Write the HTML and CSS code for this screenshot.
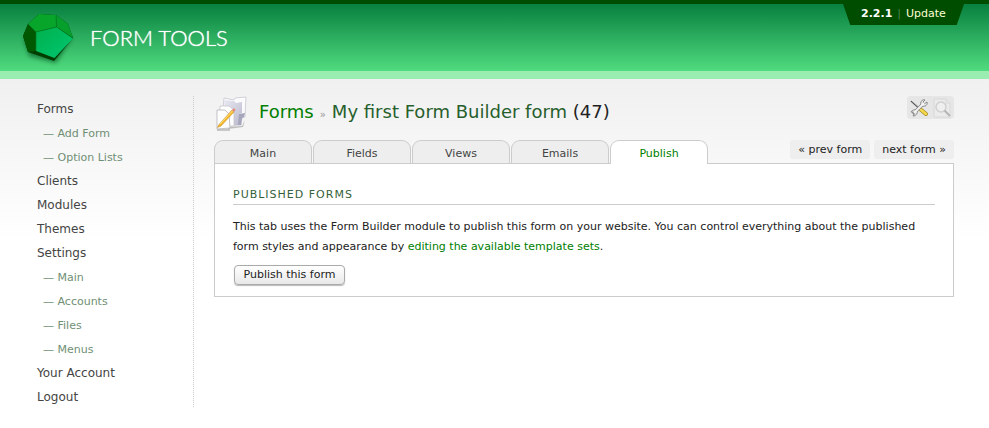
FILE: index.html
```html
<!DOCTYPE html>
<html lang="en">
<head>
<meta charset="utf-8">
<title>Form Tools - Publish</title>
<link rel="stylesheet" href="styles.css">
</head>
<body>
<header class="header">
  <a class="logo" href="#">
    <svg width="58" height="58" viewBox="19 9 58 58" aria-hidden="true">
      <defs>
        <filter id="soft" x="-20%" y="-20%" width="140%" height="150%"><feGaussianBlur stdDeviation="2"/></filter>
        <linearGradient id="front" x1="0" y1="0" x2="1" y2="1"><stop offset="0" stop-color="#00b04b"/><stop offset="1" stop-color="#00c773"/></linearGradient>
      </defs>
      <path d="M24 40 36 25 72 38 56 63 29 56Z" fill="#004d1c" opacity=".6" filter="url(#soft)"/>
      <path d="M28 24 39 14 56 15 68 24 73 38 54 61 28 52 23 36Z" fill="#003d00"/>
      <path d="M28 24 39 14 56 15 56.500 27 36 32Z" fill="#08a52b"/>
      <path d="M56 15 68 24 73 38 56.500 27Z" fill="#079f2b"/>
      <path d="M28 24 36 32 36 51 28 52 23 36Z" fill="#005800"/>
      <path d="M36 32 56.500 27 73 38.500 54.500 58 36 51Z" fill="url(#front)"/>
      <path d="M28 24 36 32 56.500 27 56 15M56.500 27 73 38M36 32V51" fill="none" stroke="#007c22" stroke-width=".7"/>
    </svg>
    <span class="logo-text">FORM TOOLS</span>
  </a>
  <div class="version"><strong>2.2.1</strong><span class="bar">|</span><a href="#">Update</a></div>
</header>
<div class="page">
  <nav class="side" aria-label="Main menu">
    <a href="#">Forms</a>
    <a class="sub" href="#">— Add Form</a>
    <a class="sub" href="#">— Option Lists</a>
    <a href="#">Clients</a>
    <a href="#">Modules</a>
    <a href="#">Themes</a>
    <a href="#">Settings</a>
    <a class="sub" href="#">— Main</a>
    <a class="sub" href="#">— Accounts</a>
    <a class="sub" href="#">— Files</a>
    <a class="sub" href="#">— Menus</a>
    <a href="#">Your Account</a>
    <a href="#">Logout</a>
  </nav>
  <main class="content">
    <div class="title-row">
      <svg class="title-icon" width="34" height="36" viewBox="0 0 34 36" aria-hidden="true">
        <defs>
          <linearGradient id="folder" x1="0" y1="0" x2="1" y2="1"><stop offset="0" stop-color="#e9e9f2"/><stop offset="1" stop-color="#b9b9cd"/></linearGradient>
        </defs>
        <path d="M12 31 28 30 31 24 29 31 14 33Z" fill="#999" opacity=".6"/>
        <path d="M10 2 20 4 21 2 32 1 31 21 28 22 27 29 12 30 9 12Z" fill="#fbfbfd" stroke="#c6c6d0" stroke-width=".8"/>
        <path d="M10 4 20 5 22 7 28 6 28 17 25 18 25 29 12 29Z" fill="url(#folder)"/>
        <path d="M25 18 31 17 30 21 28 22 27 29 24 29Z" fill="#a5a5bc"/>
        <path d="M6 10H15L20 14V30H6Z" fill="#fff" stroke="#c5c5ca" stroke-width=".8"/>
        <path d="M3 14 11 14 15 18 16 32 3 33Z" fill="#fdfdfd" stroke="#b4b4b9" stroke-width=".8"/>
        <path d="M3 34H16" stroke="#999"/>
        <path d="M3.500 31.500 5 28.500 18 14 20 16 7 30Z" fill="#f7b928" stroke="#b8862c" stroke-width=".5"/>
        <path d="M6 28 18.500 15" stroke="#ffe07c"/>
        <path d="M18 14 20 12 21.500 14 20 16Z" fill="#e28a7c"/>
      </svg>
      <h1><a href="#">Forms</a><span class="sep">»</span>My first Form Builder form <span class="id">(47)</span></h1>
      <div class="tools">
        <button type="button" aria-label="Edit form settings">
          <svg width="20" height="20" viewBox="0 0 20 20">
            <path d="M2 3 12 12" stroke="#555" stroke-width="1.500"/>
            <path d="M2 2 12 11" stroke="#ddd" stroke-width=".7"/>
            <path d="M11 11 17 16" stroke="#a78b20" stroke-width="4" stroke-linecap="round"/>
            <path d="M11 11 17 16" stroke="#f5d84d" stroke-width="2.500" stroke-linecap="round"/>
            <path d="M4 16 15 5" stroke="#888" stroke-width="3.500"/>
            <path d="M2 14C3 12 6 11 8 13 9 15 7 18 4 18L6 15 4 14ZM12 7C11 4 13 1 16 2L14 4 15 6 18 4C19 7 16 9 13 8Z" fill="#eee" stroke="#888"/>
            <path d="M5 15 15 5" stroke="#f3f3f3" stroke-width="2"/>
          </svg>
        </button>
        <button type="button" aria-label="View submissions" disabled>
          <svg width="20" height="20" viewBox="0 0 20 20">
            <path d="M2 1H14L18 5V19H2Z" fill="#ebebeb" stroke="#d9d9d9"/>
            <path d="M14 1V5H18" fill="none" stroke="#d9d9d9"/>
            <circle cx="9" cy="9" r="5" fill="#efefef" stroke="#d0d0d0" stroke-width="1.500"/>
            <path d="M12.500 12.500 18 18" stroke="#b5b5b5" stroke-width="2"/>
          </svg>
        </button>
      </div>
    </div>
    <div class="tab-row">
      <nav class="tabs" aria-label="Form sections">
        <a href="#">Main</a>
        <a href="#">Fields</a>
        <a href="#">Views</a>
        <a href="#">Emails</a>
        <a class="active" href="#">Publish</a>
      </nav>
      <div class="pager"><a href="#">« prev form</a><a href="#">next form »</a></div>
    </div>
    <section class="panel">
      <h2>PUBLISHED FORMS</h2>
      <p>This tab uses the Form Builder module to publish this form on your website. You can control everything about the published form styles and appearance by <a href="#">editing the available template sets</a>.</p>
      <button class="publish" type="button">Publish this form</button>
    </section>
  </main>
</div>
</body>
</html>
```
FILE: styles.css
```css
* { box-sizing: border-box; }

body {
  margin: 0;
  background: #fff;
  color: #222;
  font: 11px/20px Verdana, "DejaVu Sans", sans-serif;
}

a { color: inherit; text-decoration: none; }

.header {
  display: flex;
  justify-content: space-between;
  align-items: flex-start;
  height: 79px;
  padding: 0 25px 0 19px;
  border-top: 4px solid #004d00;
  border-bottom: 8px solid #9aedb0;
  background: linear-gradient(#08803f, #50db7f);
}

.logo { display: flex; align-items: center; gap: 13px; padding-top: 5px; }

.logo-text {
  color: #fff;
  font: 300 22px/28px Lato, sans-serif;
  text-shadow: 0 0 1px #fff;
}

.version {
  width: 121px;
  height: 21px;
  padding-left: 18px;
  background: #004d00;
  clip-path: polygon(0 0, 100% 0, 94% 100%, 6% 100%);
  color: #fff;
  line-height: 19px;
}

.version .bar { margin: 0 5px; color: #4d8050; }
.version a { color: #ffffd5; }

.page {
  display: flex;
  align-items: flex-start;
  padding: 17px 35px 20px 37px;
  background: linear-gradient(#f0f0f0, #fff 160px);
}

.side {
  display: flex;
  flex-direction: column;
  flex: 0 0 157px;
  padding-top: 1px;
  height: 311px;
  border-right: 1px dotted #ccc;
  color: #444;
  font-size: 12px;
  line-height: 24px;
}

.side .sub { height: 24px; padding-left: 6px; color: #6f8f74; font-size: 11px; line-height: 26px; }

.content { flex: 1; margin-left: 20px; }

.title-row { display: flex; align-items: flex-start; height: 44px; }

h1 {
  flex: 1;
  margin: 0 0 0 11px;
  color: #275f2c;
  font-size: 18px;
  font-weight: 400;
  line-height: 32px;
}

h1 a { color: #008000; }
h1 .sep { margin: 0 6px; color: #999; font-size: 10px; }
h1 .id { color: #222; }

.tools {
  display: flex;
  gap: 3px;
  padding: 2px;
  border-radius: 4px;
  background: #e6e6e6;
}

.tools button { height: 19px; padding: 0; border: 0; background: none; }
.tools svg { display: block; fill: none; }

.tab-row { display: flex; justify-content: space-between; height: 23px; }
.tabs { display: flex; gap: 1px; }

.tabs a {
  width: 98px;
  height: 23px;
  border: 1px solid #ccc;
  border-bottom: 0;
  border-radius: 9px 9px 0 0;
  background: #eee;
  color: #444;
  line-height: 25px;
  text-align: center;
}

.tabs .active { z-index: 1; height: 24px; background: #fff; color: #008000; }

.pager { display: flex; gap: 4px; }

.pager a {
  height: 19px;
  padding: 0 8px;
  border-radius: 3px;
  background: #eee;
}

.panel {
  padding: 21px 18px 11px;
  border: 1px solid #ccc;
  background: #fff;
}

h2 {
  margin: 0 0 12px;
  border-bottom: 1px solid #ccc;
  color: #365f3c;
  font-size: 11px;
  font-weight: 400;
  letter-spacing: 1px;
  line-height: 19px;
}

p { margin: 0 0 8px; }
p a { color: #008000; }

.publish {
  display: block;
  min-width: 111px;
  height: 20px;
  margin-left: 1px;
  padding: 0 8px;
  border: 1px solid #aaa;
  border-radius: 4px;
  background: linear-gradient(#fff, #f4f4f4 50%, #e8e8e8);
  box-shadow: 0 1px 1px #bbb;
  color: #222;
  font: inherit;
  line-height: 18px;
}
```
